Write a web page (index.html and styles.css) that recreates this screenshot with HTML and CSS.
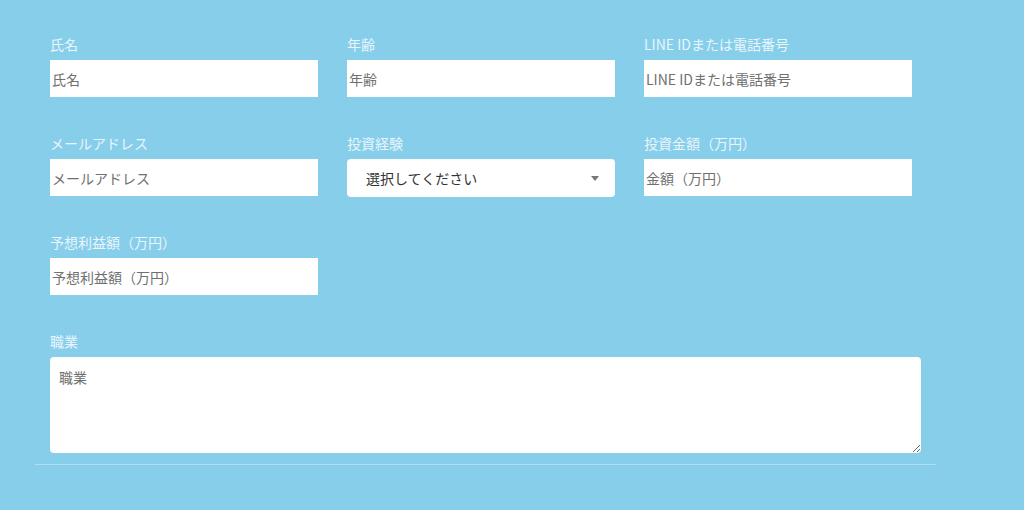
FILE: index.html
```html
<!DOCTYPE html>
<html>
<head>
    <meta charset="utf-8">
    <title>お問い合わせ</title>
    <link rel="stylesheet" href="styles.css">
</head>
<body>
    <!-- Contact form -->
    <div class="form-wrap">
        <div class="form-grid">
            <div class="field">
                <label class="field-label">氏名</label>
                <input class="field-input" type="text" placeholder="氏名">
            </div>
            <div class="field">
                <label class="field-label">年齢</label>
                <input class="field-input" type="text" placeholder="年齢">
            </div>
            <div class="field">
                <label class="field-label">LINE IDまたは電話番号</label>
                <input class="field-input" type="text" placeholder="LINE IDまたは電話番号">
            </div>

            <div class="field">
                <label class="field-label">メールアドレス</label>
                <input class="field-input" type="email" placeholder="メールアドレス">
            </div>
            <div class="field">
                <label class="field-label">投資経験</label>
                <div class="select-box">
                    <span>選択してください</span>
                    <span class="select-arrow"></span>
                </div>
            </div>
            <div class="field">
                <label class="field-label">投資金額（万円）</label>
                <input class="field-input" type="text" placeholder="金額（万円）">
            </div>

            <div class="field">
                <label class="field-label">予想利益額（万円）</label>
                <input class="field-input" type="text" placeholder="予想利益額（万円）">
            </div>
        </div>

        <div class="field field-wide">
            <label class="field-label">職業</label>
            <textarea class="field-textarea" placeholder="職業"></textarea>
        </div>

        <div class="divider"></div>
    </div>
</body>
</html>
```

FILE: styles.css
```css
body {
    margin: 0;
    background: #87ceeb;
    font-family: "Noto Sans CJK JP", "Noto Sans", sans-serif;
    height: 510px;
    overflow: hidden;
}

.form-wrap {
    width: 901px;
    margin-left: 35px;
    padding-top: 34px;
}

.form-grid {
    display: grid;
    grid-template-columns: repeat(3, 268px);
    column-gap: 29px;
    row-gap: 36px;
    padding: 0 15px;
}

.field {
    display: flex;
    flex-direction: column;
}

.field-label {
    color: #e8f5fb;
    font-size: 14px;
    line-height: 20px;
    height: 20px;
    margin-bottom: 6px;
}

/* Text inputs */
.field-input {
    box-sizing: border-box;
    width: 268px;
    height: 37px;
    border: none;
    outline: none;
    background: #fff;
    padding: 0 2px;
    font-family: inherit;
    font-size: 14px;
    color: #333;
}

.field-input::placeholder,
.field-textarea::placeholder {
    color: #707070;
}

/* Select box */
.select-box {
    box-sizing: border-box;
    height: 38px;
    margin-bottom: -1px;
    background: #fff;
    border-radius: 4px;
    display: flex;
    align-items: center;
    justify-content: space-between;
    padding: 0 16px 0 19px;
    font-size: 14px;
    color: #333;
}

.select-arrow {
    width: 0;
    height: 0;
    border-left: 4px solid transparent;
    border-right: 4px solid transparent;
    border-top: 5px solid #777;
}

/* Textarea */
.field-wide {
    margin-top: 36px;
    padding: 0 15px;
}

.field-textarea {
    box-sizing: border-box;
    width: 871px;
    height: 96px;
    border: none;
    outline: none;
    border-radius: 4px;
    background: #fff;
    padding: 10px 9px;
    font-family: inherit;
    font-size: 14px;
    color: #333;
    resize: vertical;
    display: block;
}

.divider {
    margin-top: 11px;
    height: 1px;
    background: #aedff2;
}
```
